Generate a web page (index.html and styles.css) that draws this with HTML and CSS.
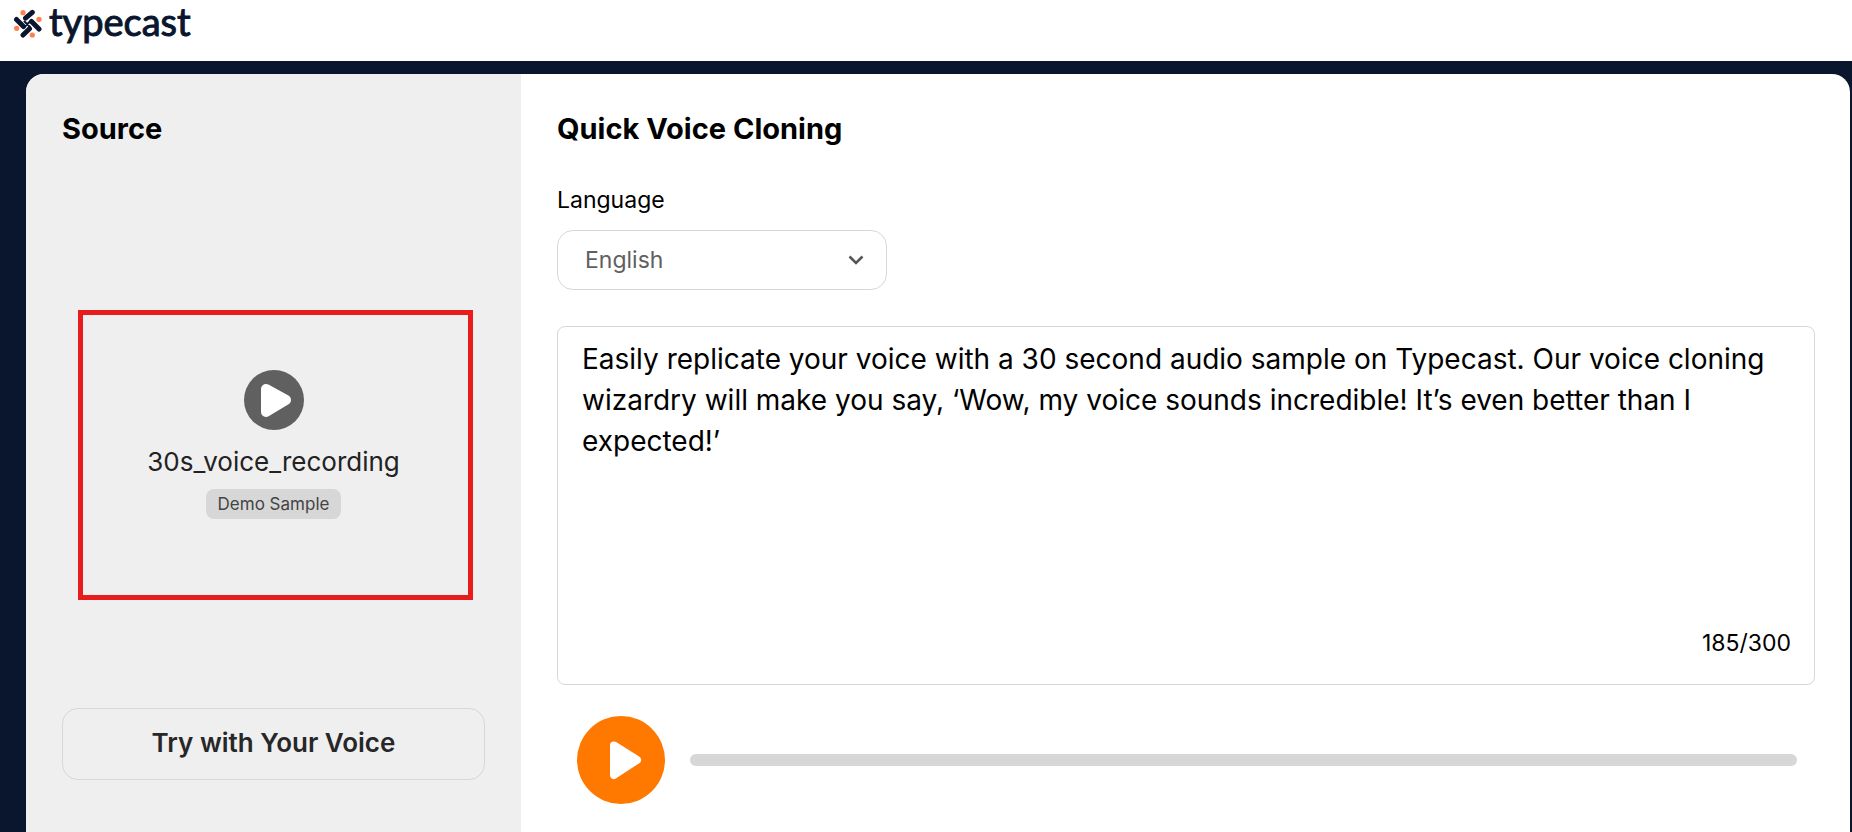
FILE: index.html
```html
<!DOCTYPE html>
<html lang="en">
<head>
	<meta charset="UTF-8">
	<meta name="viewport" content="width=device-width, initial-scale=1">
	<title>Quick Voice Cloning - typecast</title>
	<link rel="stylesheet" href="styles.css">
</head>
<body>
	<header class="header">
		<a href="#" class="logo">
			<svg class="logo-mark" viewBox="0 0 29 29" aria-hidden="true">
				<g stroke="#0a162d" stroke-width="5" stroke-linecap="round">
					<path d="M12.500 9.200L19.300 3.300M3.500 10.500L10.500 17.500M18.500 12.500L26 20M10 26L16.500 19.800" />
					<path d="M11.500 12.500L17 18M12 17.500L17 12.500" stroke-width="2" />
				</g>
				<g fill="#ff7f4d">
					<circle cx="10" cy="3.700" r="2.600" />
					<circle cx="26" cy="10.300" r="2.600" />
					<circle cx="3.700" cy="19.300" r="2.600" />
					<circle cx="19.300" cy="26" r="2.600" />
				</g>
			</svg>
			<span class="logo-name">typecast</span>
		</a>
	</header>

	<main class="card">
		<section class="source">
			<h2 class="title">Source</h2>
			<div class="sample">
				<button type="button" class="sample-play" aria-label="Play sample">
					<svg viewBox="0 0 60 60" aria-hidden="true">
						<path d="M22 19L42 30L22 42Z" fill="#fff" stroke="#fff" stroke-width="10" stroke-linejoin="round" />
					</svg>
				</button>
				<p class="sample-name">30s_voice_recording</p>
				<span class="tag">Demo Sample</span>
			</div>
			<button type="button" class="try-button">Try with Your Voice</button>
		</section>

		<section class="cloning">
			<h2 class="title">Quick Voice Cloning</h2>
			<label class="label" for="language">Language</label>
			<div class="select-box">
				<select id="language" class="select">
					<option>English</option>
				</select>
				<svg class="chevron" viewBox="0 0 16 10" aria-hidden="true">
					<path d="M1.500 1.500L8 8L14.500 1.500" fill="none" stroke="#555" stroke-width="2.500" />
				</svg>
			</div>

			<div class="script-box">
				<textarea class="script" rows="7" maxlength="300" aria-label="Script" spellcheck="false">Easily replicate your voice with a 30 second audio sample on Typecast. Our voice cloning wizardry will make you say, ‘Wow, my voice sounds incredible! It’s even better than I expected!’</textarea>
				<p class="counter">185/300</p>
			</div>

			<div class="player">
				<button type="button" class="play" aria-label="Play">
					<svg viewBox="0 0 88 88" aria-hidden="true">
						<path d="M37 29.500L60 44L37 59Z" fill="#fff" stroke="#fff" stroke-width="8" stroke-linejoin="round" />
					</svg>
				</button>
				<progress class="track" value="0" max="100" aria-label="Playback"></progress>
			</div>
		</section>
	</main>
</body>
</html>
```

FILE: styles.css
```css
* {
	box-sizing: border-box;
	margin: 0;
	padding: 0;
}

body {
	display: flex;
	flex-direction: column;
	min-height: 100vh;
	background: #0a162d;
	color: #000;
	font-family: Inter, "Liberation Sans", sans-serif;
}

button, select, textarea {
	font-family: inherit;
}

button {
	border: none;
	cursor: pointer;
}

svg {
	display: block;
}

/* header */
.header {
	height: 61px;
	padding: 0 13px;
	background: #fff;
}

.logo {
	display: inline-flex;
	align-items: center;
	gap: 7px;
	height: 47px;
	color: #0a162d;
	text-decoration: none;
}

.logo-mark {
	width: 29px;
	height: 29px;
}

.logo-name {
	padding-bottom: 6px;
	font-family: Lato, sans-serif;
	font-size: 38px;
	font-weight: 400;
	line-height: 40px;
	-webkit-text-stroke: 1px #0a162d;
}

/* card */
.card {
	flex: 1;
	display: grid;
	grid-template-columns: 495fr 1329fr;
	margin: 13px 2px 0 26px;
	border-radius: 18px 18px 0 0;
	background: #fff;
	overflow: hidden;
}

.source,
.cloning {
	display: flex;
	flex-direction: column;
	min-width: 0;
	padding: 37px 35px 16px 36px;
}

.source {
	padding-right: 36px;
	background: #efefef;
}

.title {
	font-size: 29px;
	font-weight: 700;
	line-height: 36px;
}

/* source */
.sample {
	display: flex;
	flex-direction: column;
	align-items: center;
	margin: 163px 12px 0 16px;
	padding: 55px 4px 76px 0;
	border: 5px solid #e81c1c;
}

.sample-play {
	width: 60px;
	height: 60px;
	border-radius: 50%;
	background: #606060;
}

.sample-name {
	margin-top: 16px;
	color: #222;
	font-size: 26px;
	line-height: 32px;
}

.tag {
	margin-top: 11px;
	padding: 0 12px;
	border-radius: 8px;
	background: #d7d7d7;
	color: #444;
	font-size: 17px;
	line-height: 30px;
}

.try-button {
	height: 72px;
	margin-top: 108px;
	padding-bottom: 3px;
	border: 1px solid #d7d7d7;
	border-radius: 16px;
	background: none;
	color: #272727;
	font-size: 26px;
	font-weight: 600;
}

/* cloning */
.label {
	margin-top: 39px;
	font-size: 23px;
	line-height: 28px;
}

.select-box {
	display: grid;
	align-items: center;
	width: 330px;
	max-width: 100%;
	margin-top: 16px;
}

.select,
.chevron {
	grid-area: 1 / 1;
}

.select {
	width: 100%;
	height: 60px;
	padding: 0 27px 1px;
	border: 1px solid #d7d7d7;
	border-radius: 16px;
	background: #fff;
	color: #606060;
	font-size: 23px;
	appearance: none;
}

.chevron {
	justify-self: end;
	width: 16px;
	height: 10px;
	margin-right: 23px;
	pointer-events: none;
}

.script-box {
	margin-top: 36px;
	border: 1px solid #d7d7d7;
	border-radius: 8px;
}

.script {
	display: block;
	width: 100%;
	padding: 12px 24px 3px;
	border: none;
	outline: none;
	background: none;
	color: #000;
	font-size: 28px;
	line-height: 41px;
	resize: none;
	overflow: hidden;
}

.counter {
	padding: 0 23px 27px;
	font-size: 23px;
	line-height: 28px;
	text-align: right;
}

.player {
	display: flex;
	align-items: center;
	gap: 25px;
	margin-top: 31px;
	padding: 0 18px 0 20px;
}

.play {
	flex: none;
	width: 88px;
	height: 88px;
	border-radius: 50%;
	background: #ff7900;
}

.track {
	flex: 1;
	height: 12px;
	border: none;
	border-radius: 6px;
	background: #d7d7d7;
	appearance: none;
	overflow: hidden;
}

.track::-webkit-progress-bar {
	background: #d7d7d7;
}

.track::-webkit-progress-value {
	background: #ff7900;
}
```
